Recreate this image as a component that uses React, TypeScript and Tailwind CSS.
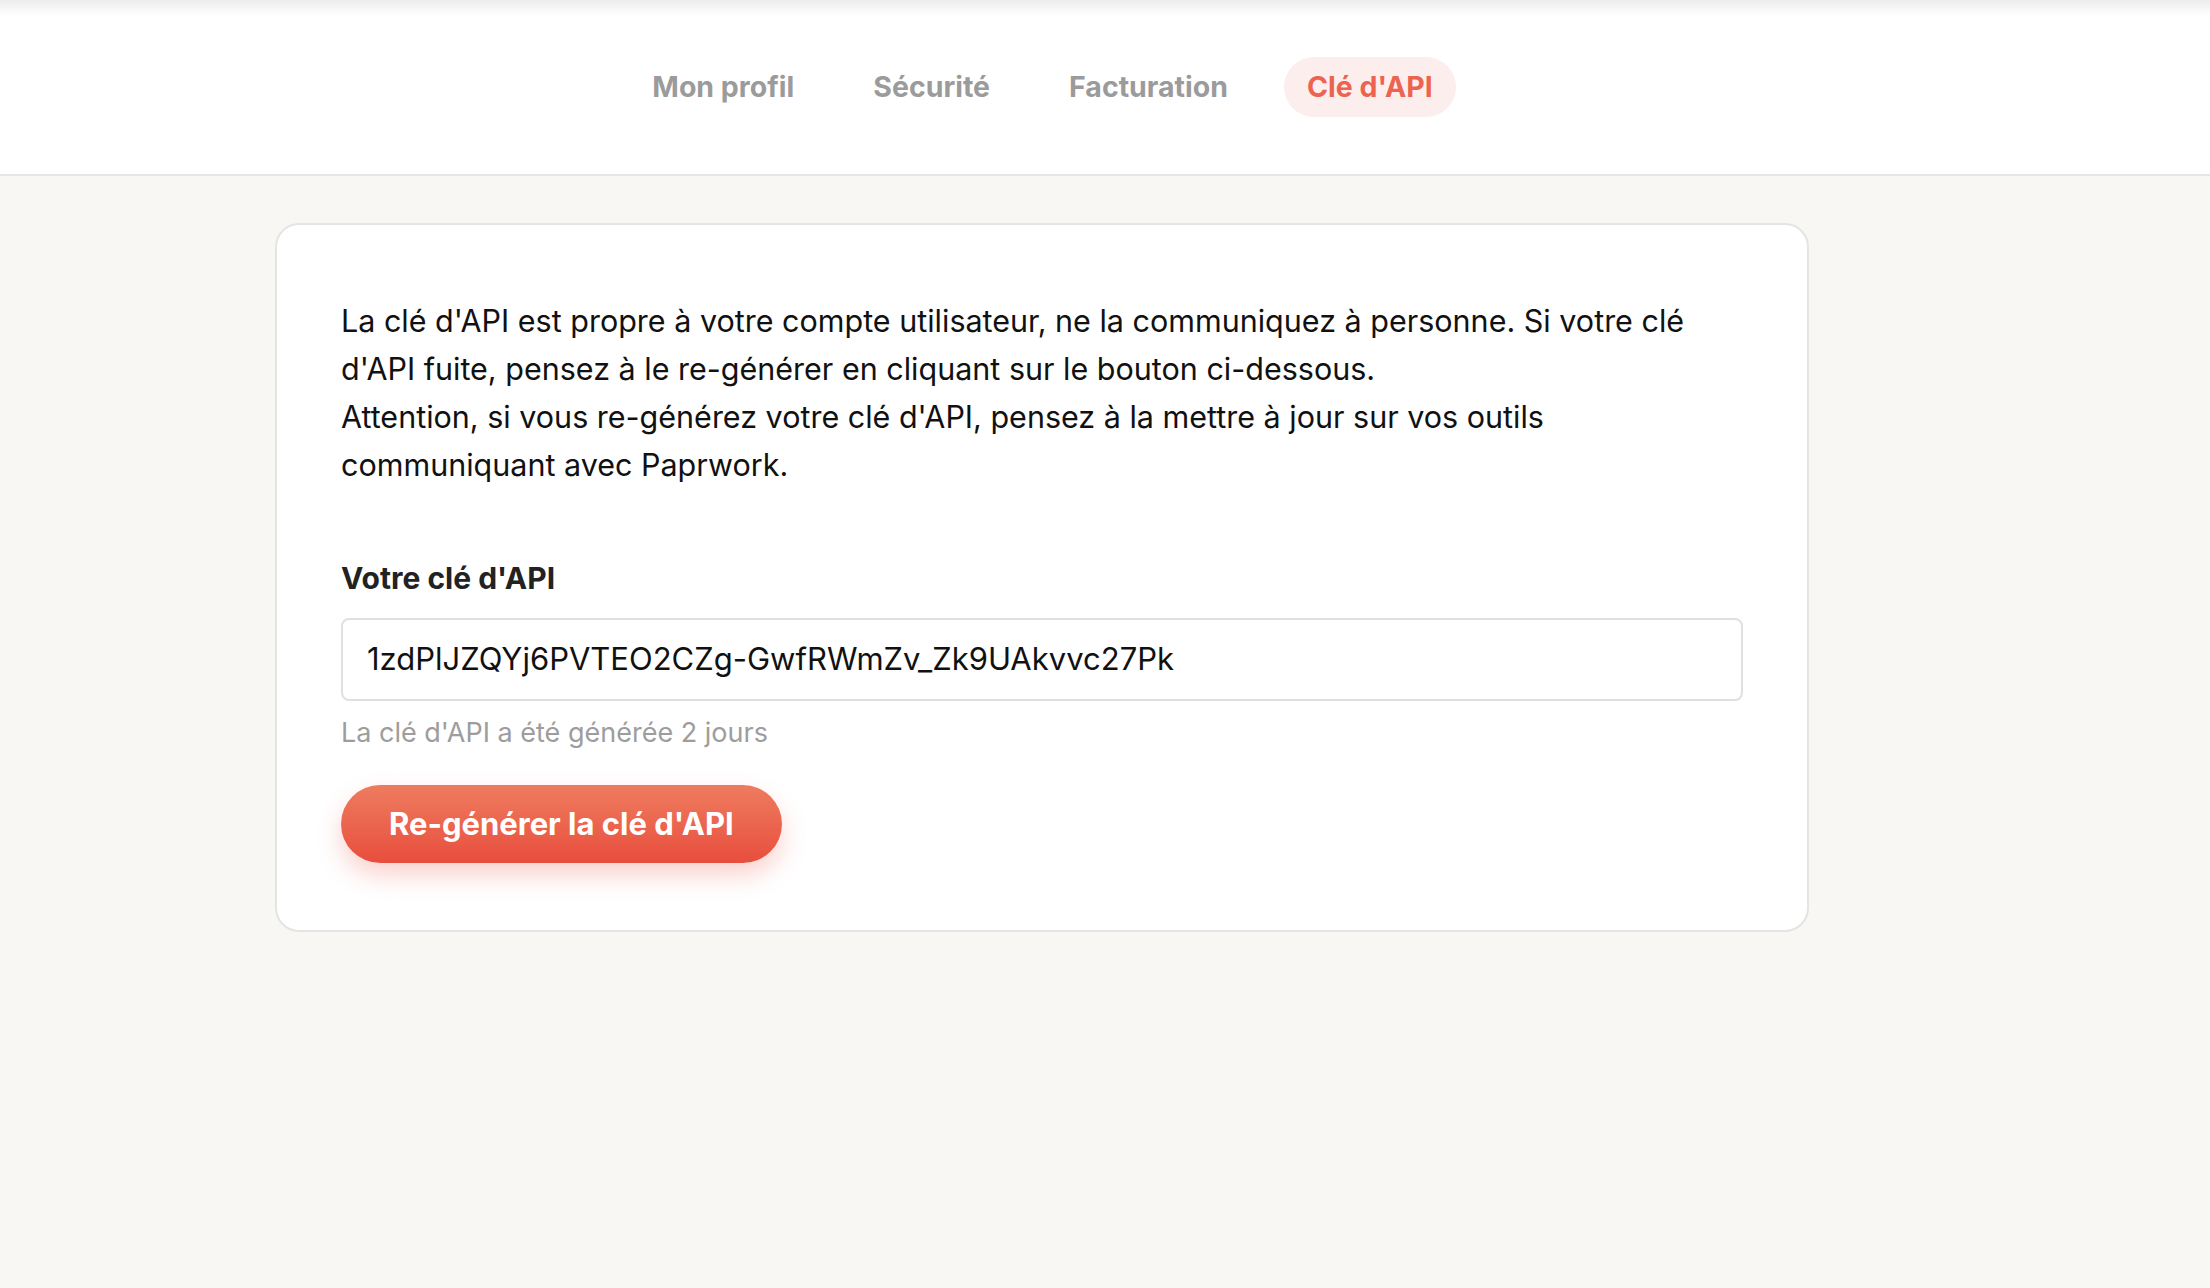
import React from "react";

export default function App() {
  const tabs = ["Mon profil", "Sécurité", "Facturation"];
  return (
    <div
      className="min-h-[1288px] w-full bg-[#f8f7f4]"
      style={{ fontFamily: "Inter, 'Noto Sans', sans-serif" }}
    >
      <header className="relative h-[176px] bg-white border-b-2 border-[#e6e5e1] flex items-center justify-center">
        <div className="absolute top-0 left-0 right-0 h-[16px] bg-gradient-to-b from-[#ececec] to-white" />
        <nav className="flex items-center gap-[33px] mr-[125px]">
          {tabs.map((t) => (
            <span
              key={t}
              className="px-[23px] h-[60px] flex items-center text-[28.5px] font-bold text-[#9b9b9b]"
            >
              {t}
            </span>
          ))}
          <span className="px-[23px] h-[60px] flex items-center rounded-full bg-[#fdeeee] text-[28.5px] font-bold text-[#ec6450]">
            Clé d'API
          </span>
        </nav>
      </header>
      <main className="pt-[47px] pl-[275px]">
        <div className="w-[1534px] bg-white border-2 border-[#e4e4e2] rounded-[24px] px-[64px] pt-[72px] pb-[67px]">
          <p className="text-[30.5px] leading-[48px] text-[#111]">
            La clé d'API est propre à votre compte utilisateur, ne la communiquez à personne. Si votre clé d'API fuite, pensez à le re-générer en cliquant sur le bouton ci-dessous.
            <br />
            Attention, si vous re-générez votre clé d'API, pensez à la mettre à jour sur vos outils communiquant avec Paprwork.
          </p>
          <div className="mt-[69px] text-[30px] font-bold text-[#222] leading-[40px]">
            Votre clé d'API
          </div>
          <div className="mt-[20px] h-[83px] border-2 border-[#e0e0e0] rounded-[8px] flex items-center px-[24px] text-[31px] text-[#111]">
            1zdPlJZQYj6PVTEO2CZg-GwfRWmZv_Zk9UAkvvc27Pk
          </div>
          <div className="mt-[14px] text-[27px] text-[#9d9d9d] leading-[36px]">
            La clé d'API a été générée 2 jours
          </div>
          <button className="mt-[34px] h-[78px] px-[48px] rounded-full bg-gradient-to-b from-[#ee7b5f] to-[#e84d3d] text-white text-[31px] font-bold shadow-[0_12px_24px_rgba(232,77,61,0.25)]">
            Re-générer la clé d'API
          </button>
        </div>
      </main>
    </div>
  );
}
